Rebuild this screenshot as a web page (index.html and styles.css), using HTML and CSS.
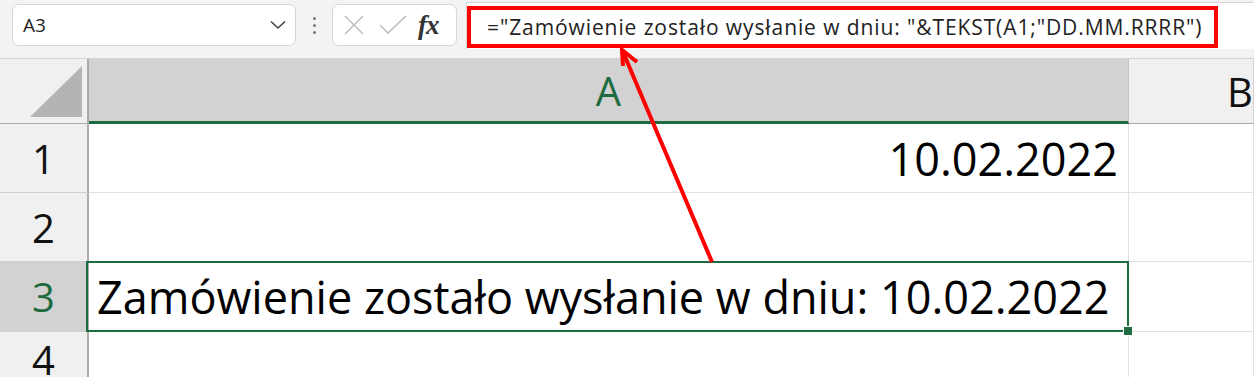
FILE: index.html
```html
<!DOCTYPE html>
<html lang="pl">
<head>
    <meta charset="UTF-8">
    <title>Excel - TEKST</title>
    <link rel="stylesheet" href="styles.css">
</head>
<body>

<div class="toolbar">
    <div class="name-box">
        <span>A3</span>
        <svg class="chevron" width="16" height="10" viewBox="0 0 16 10"><path d="M1 1.5 L8 8 L15 1.5" fill="none" stroke="#444" stroke-width="1.6"/></svg>
    </div>
    <div class="dots"><i></i><i></i><i></i></div>
    <div class="fx-box">
        <svg width="22" height="22" viewBox="0 0 22 22"><path d="M2 2 L20 20 M20 2 L2 20" stroke="#b8b8b8" stroke-width="1.4" fill="none"/></svg>
        <svg width="28" height="22" viewBox="0 0 28 22"><path d="M1 11 L9 19 L27 2" stroke="#b8b8b8" stroke-width="1.4" fill="none"/></svg>
        <span class="fx">fx</span>
    </div>
    <div class="formula">
        <div class="formula-input">="Zamówienie zostało wysłanie w dniu: "&amp;TEKST(A1;"DD.MM.RRRR")</div>
    </div>
</div>

<div class="sheet">
    <div class="corner"><div class="triangle"></div></div>
    <div class="col-head selected">A</div>
    <div class="col-head last">B</div>

    <div class="row-head">1</div>
    <div class="cell right">10.02.2022</div>
    <div class="cell"></div>

    <div class="row-head">2</div>
    <div class="cell"></div>
    <div class="cell"></div>

    <div class="row-head selected">3</div>
    <div class="cell active">Zamówienie zostało wysłanie w dniu: 10.02.2022</div>
    <div class="cell"></div>

    <div class="row-head">4</div>
    <div class="cell"></div>
    <div class="cell"></div>
</div>

<!-- annotation arrow -->
<svg class="arrow" width="1254" height="377" viewBox="0 0 1254 377">
    <path d="M712 262 L623 52" stroke="#ff0000" stroke-width="4" fill="none"/>
    <path d="M637 62 L622 50 L623 66" stroke="#ff0000" stroke-width="4" fill="none" stroke-linejoin="miter"/>
</svg>

</body>
</html>
```

FILE: styles.css
```css
* {
    margin: 0;
    padding: 0;
    box-sizing: border-box;
}

body {
    width: 1254px;
    height: 377px;
    overflow: hidden;
    background-color: #fff;
    font-family: 'Open Sans', 'Noto Sans', sans-serif;
    position: relative;
}

/* formula bar */
.toolbar {
    height: 59px;
    background-color: #f3f3f3;
    border-bottom: 1px solid #d4d4d4;
    display: flex;
    align-items: flex-start;
    padding: 4px 0 0 12px;
}

.name-box {
    width: 284px;
    height: 42px;
    background-color: #fff;
    border: 1px solid #d6d6d6;
    border-radius: 7px;
    display: flex;
    align-items: center;
    justify-content: space-between;
    padding: 0 9px 0 10px;
    font-size: 19px;
    color: #222;
}

.dots {
    width: 36px;
    height: 42px;
    display: flex;
    flex-direction: column;
    align-items: center;
    justify-content: center;
    gap: 4px;
}

.dots i {
    width: 3px;
    height: 3px;
    background-color: #777;
    border-radius: 50%;
}

.fx-box {
    width: 125px;
    height: 42px;
    background-color: #fff;
    border: 1px solid #d6d6d6;
    border-radius: 7px;
    display: flex;
    align-items: center;
    gap: 14px;
    padding-left: 10px;
}

.fx {
    font-family: 'Liberation Serif', 'DejaVu Serif', serif;
    font-style: italic;
    font-weight: bold;
    font-size: 27px;
    color: #333;
    letter-spacing: -1px;
    margin-left: -3px;
}

.formula {
    flex: 1;
    height: 47px;
    margin: -2px 0 0 9px;
    background-color: #fff;
    border-top: 1px solid #d4d4d4;
    border-left: 1px solid #d4d4d4;
    padding-top: 3px;
}

.formula-input {
    width: 751px;
    height: 42px;
    border: 4px solid #ff0000;
    display: flex;
    align-items: center;
    padding-left: 16px;
    font-size: 21px;
    letter-spacing: 0.9px;
    color: #222;
    white-space: nowrap;
}

/* sheet grid */
.sheet {
    display: grid;
    grid-template-columns: 89px 1040px 1fr;
    grid-template-rows: 65px 69px 69px 70px 1fr;
    height: 317px;
}

.corner {
    background-color: #f0f0f0;
    border-right: 2px solid #ababab;
    border-bottom: 1px solid #ababab;
    position: relative;
}

.triangle {
    position: absolute;
    right: 5px;
    bottom: 6px;
    width: 52px;
    height: 51px;
    background-color: #b4b4b4;
    clip-path: polygon(100% 0, 100% 100%, 0 100%);
}

.col-head {
    background-color: #f0f0f0;
    border-right: 1px solid #d4d4d4;
    border-bottom: 1px solid #ababab;
    display: flex;
    align-items: center;
    justify-content: center;
    font-size: 40px;
    color: #111;
}

.col-head.last {
    justify-content: flex-start;
    padding-left: 98px;
    overflow: hidden;
}

.col-head.selected {
    background-color: #d2d2d2;
    color: #1e6b3f;
    border-bottom: 3px solid #1e6b3f;
    border-right-color: #c4c4c4;
}

.row-head {
    background-color: #f0f0f0;
    border-right: 2px solid #ababab;
    border-bottom: 1px solid #d0d0d0;
    display: flex;
    align-items: center;
    justify-content: center;
    font-size: 40px;
    color: #111;
}

.row-head.selected {
    background-color: #d2d2d2;
    color: #1e6b3f;
}

.cell {
    border-right: 1px solid #e1e1e1;
    border-bottom: 1px solid #e1e1e1;
    display: flex;
    align-items: center;
    padding: 0 8px;
    font-size: 45px;
    color: #000;
    white-space: nowrap;
}

.cell.right {
    justify-content: flex-end;
    padding-right: 10px;
}

.cell.active {
    position: relative;
}

.cell.active::after {
    content: '';
    position: absolute;
    top: -1px;
    left: -3px;
    right: -1px;
    bottom: -1px;
    border: 2px solid #1e6b3f;
}

.cell.active::before {
    content: '';
    position: absolute;
    right: -5px;
    bottom: -5px;
    width: 8px;
    height: 8px;
    background-color: #1e6b3f;
    border: 1px solid #fff;
    z-index: 1;
}

.arrow {
    position: absolute;
    left: 0;
    top: 0;
    pointer-events: none;
}
```
